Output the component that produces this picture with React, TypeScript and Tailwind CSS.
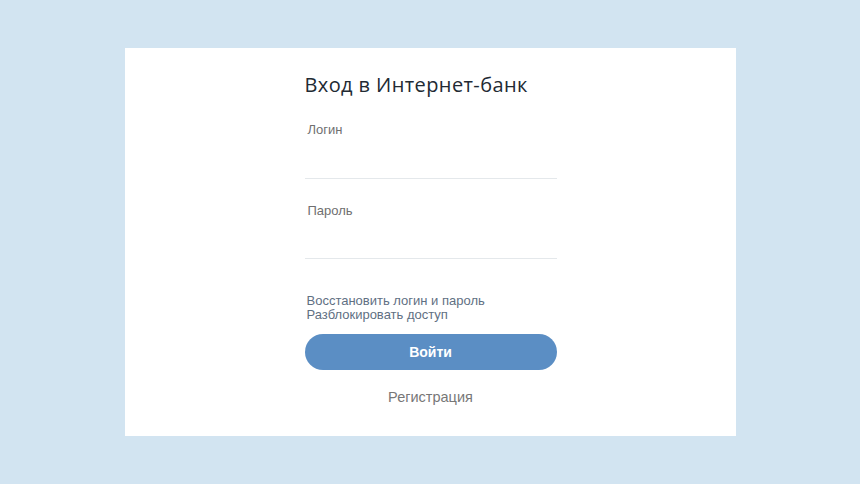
import type { FC } from "react";

const Field: FC<{ label: string; type?: string }> = ({ label, type = "text" }) => (
	<label className="flex flex-col">
		<span className="pl-[3px] text-[13px] leading-4 text-[#6f6f6f]">{label}</span>
		<input
			type={type}
			className="h-[41px] w-full border-b border-[#e4e8eb] bg-transparent text-[14px] text-[#333] outline-none"
		/>
	</label>
);

export default function App() {
	return (
		<div
			className="flex h-[484px] w-full items-center justify-center bg-[#d2e4f1]"
			style={{ fontFamily: '"Liberation Sans", Arial, sans-serif' }}
		>
			<div className="flex h-[388px] w-[611px] justify-center bg-white pl-[1px] pt-[25px]">
				<form className="flex w-[252px] flex-col" onSubmit={(e) => e.preventDefault()}>
					<h1
						className="text-[20px] leading-6 tracking-[0.4px] text-[#222a33]"
						style={{ fontFamily: '"Open Sans", Inter, sans-serif' }}
					>
						Вход в Интернет-банк
					</h1>
					<div className="mt-[25px]">
						<Field label="Логин" />
					</div>
					<div className="mt-[24px]">
						<div className="flex flex-col">
							<span className="pl-[3px] text-[13px] leading-4 text-[#6f6f6f]">Пароль</span>
							<input
								type="password"
								className="h-[40px] w-full border-b border-[#e4e8eb] bg-transparent text-[14px] text-[#333] outline-none"
							/>
						</div>
					</div>
					<div className="mt-[35px] flex flex-col pl-[2px] text-[13px] leading-[14px] text-[#5f7083]">
						<a href="#">Восстановить логин и пароль</a>
						<a href="#">Разблокировать доступ</a>
					</div>
					<button
						type="submit"
						className="mt-[12px] h-[36px] w-full rounded-full bg-[#5b8ec4] text-[14px] font-bold text-white"
					>
						Войти
					</button>
					<a href="#" className="mt-[17px] text-center text-[14.5px] leading-5 text-[#777]">
						Регистрация
					</a>
				</form>
			</div>
		</div>
	);
}
